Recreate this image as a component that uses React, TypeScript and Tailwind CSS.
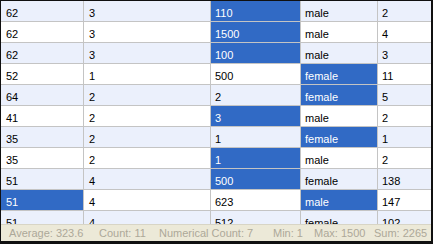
import React from "react";

type Row = {
  cells: (string | number)[];
  sel: number[];
};

const rows: Row[] = [
  { cells: [62, 3, 110, "male", 2], sel: [2] },
  { cells: [62, 3, 1500, "male", 4], sel: [2] },
  { cells: [62, 3, 100, "male", 3], sel: [2] },
  { cells: [52, 1, 500, "female", 11], sel: [3] },
  { cells: [64, 2, 2, "female", 5], sel: [3] },
  { cells: [41, 2, 3, "male", 2], sel: [2] },
  { cells: [35, 2, 1, "female", 1], sel: [3] },
  { cells: [35, 2, 1, "male", 2], sel: [2] },
  { cells: [51, 4, 500, "female", 138], sel: [2] },
  { cells: [51, 4, 623, "male", 147], sel: [0, 3] },
  { cells: [51, 4, 512, "female", 102], sel: [] },
];

// widths include the 1px grid line on the right (last column has none)
const colClass = [
  "w-[83px] border-r border-r-[#c4c4c4] pl-[5px]",
  "w-[127px] border-r border-r-[#c4c4c4] pl-[5px]",
  "w-[90px] border-r border-r-[#c4c4c4] pl-[4px]",
  "w-[77px] border-r border-r-[#c4c4c4] pl-[4px]",
  "w-[53px] pl-[4px]",
];

const stats = [
  { label: "Average: 323.6", w: "w-[90px]" },
  { label: "Count: 11", w: "w-[60px]" },
  { label: "Numerical Count: 7", w: "w-[114px]" },
  { label: "Min: 1", w: "w-[41px]" },
  { label: "Max: 1500", w: "w-[60px]" },
  { label: "Sum: 2265", w: "" },
];

export default function App() {
  return (
    <div
      className="w-[433px] h-[244px] flex flex-col border-l border-t border-r-2 border-b-[3px] border-[#101010] bg-white overflow-hidden text-[11px] text-black"
      style={{ fontFamily: '"Liberation Sans", Arial, sans-serif' }}
    >
      <div className="h-[223px] overflow-hidden">
        {rows.map((row, i) => (
          <div
            key={i}
            className={`flex h-[21px] border-b border-b-[#c4c4c4] ${
              i % 2 === 0 ? "bg-[#ebf0fc]" : "bg-white"
            }`}
          >
            {row.cells.map((c, j) => {
              const selected = row.sel.includes(j);
              return (
                <div
                  key={j}
                  className={`${colClass[j]} shrink-0 h-[20px] pt-[4px] leading-[16px] whitespace-nowrap ${
                    selected ? "bg-[#316ac5] text-white" : ""
                  }`}
                >
                  {c}
                </div>
              );
            })}
          </div>
        ))}
      </div>
      <div className="flex h-[17px] border-t border-t-[#d8d5c6] bg-[#ece9d8] pl-[8px] pt-[1px] leading-[14px] text-[#aca899] whitespace-nowrap">
        {stats.map((s) => (
          <span key={s.label} className={`${s.w} shrink-0`}>
            {s.label}
          </span>
        ))}
      </div>
    </div>
  );
}
